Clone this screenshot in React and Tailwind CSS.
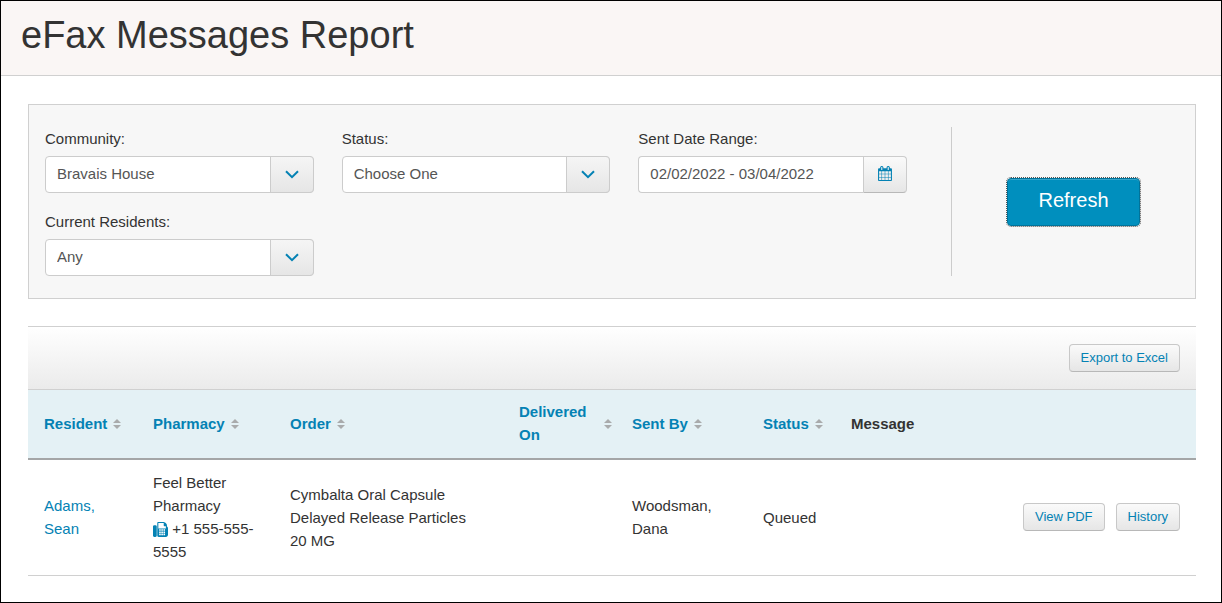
import React, { useState } from 'react';

const communities = ['Bravais House'];
const statuses = ['Choose One', 'Queued', 'Delivered', 'Failed'];
const residentOptions = ['Any', 'Yes', 'No'];

const columns = [
  { key: 'resident', label: 'Resident', sortable: true, width: 'w-[109px]' },
  { key: 'pharmacy', label: 'Pharmacy', sortable: true, width: 'w-[137px]' },
  { key: 'order', label: 'Order', sortable: true, width: 'w-[229px]' },
  { key: 'deliveredOn', label: 'Delivered On', sortable: true, width: 'w-[113px]' },
  { key: 'sentBy', label: 'Sent By', sortable: true, width: 'w-[131px]' },
  { key: 'status', label: 'Status', sortable: true, width: 'w-[88px]' },
  { key: 'message', label: 'Message', sortable: false, width: 'w-[97px]' },
];

const initialMessages = [
  {
    id: 1,
    resident: 'Adams, Sean',
    pharmacy: 'Feel Better Pharmacy',
    fax: '+1 555-555-5555',
    order: 'Cymbalta Oral Capsule Delayed Release Particles 20 MG',
    deliveredOn: '',
    sentBy: 'Woodsman, Dana',
    status: 'Queued',
    message: '',
  },
];

const ChevronIcon = () => (
  <svg viewBox="0 0 14 9" className="w-3.5 h-[9px]" fill="none" stroke="#0482b4" strokeWidth="2" aria-hidden="true">
    <path d="M1 1.2 L7 7.2 L13 1.2" />
  </svg>
);

const CalendarIcon = () => (
  <svg viewBox="0 0 1664 1792" className="w-3.5 h-[15px]" fill="#0482b4" fillRule="evenodd" aria-hidden="true">
    <path d="M1664 384v1280q0 52-38 90t-90 38H128q-52 0-90-38t-38-90V384q0-52 38-90t90-38h128v-96q0-66 47-113t113-47h64q66 0 113 47t47 113v96h384v-96q0-66 47-113t113-47h64q66 0 113 47t47 113v96h128q52 0 90 38t38 90zM512 448V160q0-14-9-23t-23-9h-64q-14 0-23 9t-9 23v288q0 14 9 23t23 9h64q14 0 23-9t9-23zM1280 448V160q0-14-9-23t-23-9h-64q-14 0-23 9t-9 23v288q0 14 9 23t23 9h64q14 0 23-9t9-23zM128 640h288v288H128zM480 640h320v288H480zM864 640h320v288H864zM1248 640h288v288h-288zM128 992h288v320H128zM480 992h320v320H480zM864 992h320v320H864zM1248 992h288v320h-288zM128 1376h288v288H128zM480 1376h320v288H480zM864 1376h320v288H864zM1248 1376h288v288h-288z" />
  </svg>
);

const FaxIcon = () => (
  <svg viewBox="0 0 1792 1792" className="inline-block align-text-bottom w-[15px] h-[15px]" fill="#0482b4" fillRule="evenodd" aria-hidden="true">
    <path d="M288 384q66 0 113 47t47 113v1088q0 66-47 113t-113 47h-128q-66 0-113-47t-47-113v-1088q0-66 47-113t113-47h128zM1664 547q58 34 93 93t35 128v768q0 106-75 181t-181 75h-864q-66 0-113-47t-47-113v-1536q0-40 28-68t68-28h672q40 0 88 20t76 48l152 152q28 28 48 76t20 88v163zM736 864h192v192h-192zM992 864h192v192h-192zM1248 864h192v192h-192zM736 1120h192v192h-192zM992 1120h192v192h-192zM1248 1120h192v192h-192zM736 1376h192v192h-192zM992 1376h192v192h-192zM1248 1376h192v192h-192zM1536 768v-256h-160q-40 0-68-28t-28-68v-288h-640v640h896z" />
  </svg>
);

const SortIcon = () => (
  <svg viewBox="0 0 8 10" className="shrink-0 w-2 h-2.5 mt-0.5" fill="#a9abac" aria-hidden="true">
    <path d="M4 0 L8 4 H0 Z" />
    <path d="M4 10 L8 6 H0 Z" />
  </svg>
);

const SelectField = ({ id, label, value, options, onChange }) => (
  <div className="flex flex-col gap-1.5">
    <label htmlFor={id}>{label}</label>
    <div className="relative">
      <select
        id={id}
        value={value}
        onChange={(e) => onChange(e.target.value)}
        className="appearance-none block w-full h-[37px] pl-[11px] pr-12 pb-0.5 bg-white border border-[#ccc] rounded text-[#555]"
      >
        {options.map((option) => (
          <option key={option}>{option}</option>
        ))}
      </select>
      {/* Arrow box on top of the native select */}
      <span className="absolute inset-y-0 right-0 w-11 flex items-center justify-center border border-[#ccc] rounded-r bg-linear-to-b from-[#f5f5f5] to-[#e6e6e6] pointer-events-none">
        <ChevronIcon />
      </span>
    </div>
  </div>
);

const SmallButton = ({ children, ...props }) => (
  <button
    type="button"
    className="h-7 px-[11px] border border-[#c8c8c8] border-b-[#b8b8b8] rounded bg-linear-to-b from-[#fafafa] to-[#e6e6e6] text-[13px] leading-5 text-[#0482b4] whitespace-nowrap"
    {...props}
  >
    {children}
  </button>
);

const App = () => {
  const [community, setCommunity] = useState('Bravais House');
  const [status, setStatus] = useState('Choose One');
  const [currentResidents, setCurrentResidents] = useState('Any');
  const [dateRange, setDateRange] = useState('02/02/2022 - 03/04/2022');
  const [messages, setMessages] = useState(initialMessages);

  const handleSort = (key) => {
    setMessages([...messages].sort((a, b) => a[key].localeCompare(b[key])));
  };

  return (
    <div className="min-h-screen bg-white border border-black font-['Liberation_Sans',Arial,sans-serif] text-[15px] leading-[23px] text-[#333]">
      <header className="bg-[#faf6f5] border-b border-[#d0d0d0] px-5 pt-3 pb-[18px]">
        <h1 className="text-[38px] leading-11">eFax Messages Report</h1>
      </header>

      <main className="pl-[27px] pr-[25px] pt-7 pb-6">
        {/* Filters */}
        <form onSubmit={(e) => e.preventDefault()} className="flex py-[22px] bg-[#f7f7f7] border border-[#d0d0d0]">
          <div className="flex-1 grid grid-cols-3 gap-x-7 gap-y-[17px] pl-4 pr-11">
            <SelectField id="community" label="Community:" value={community} options={communities} onChange={setCommunity} />
            <SelectField id="status" label="Status:" value={status} options={statuses} onChange={setStatus} />
            <div className="flex flex-col gap-1.5">
              <label htmlFor="date-range">Sent Date Range:</label>
              <div className="flex">
                <input
                  id="date-range"
                  type="text"
                  value={dateRange}
                  onChange={(e) => setDateRange(e.target.value)}
                  className="flex-1 min-w-0 h-[37px] px-[11px] pb-0.5 bg-white border border-r-0 border-[#ccc] rounded-l text-[#555]"
                />
                <button type="button" aria-label="Pick dates" className="w-11 pb-0.5 flex items-center justify-center border border-[#ccc] border-b-[#b8b8b8] rounded-r bg-linear-to-b from-[#fafafa] to-[#e6e6e6]">
                  <CalendarIcon />
                </button>
              </div>
            </div>
            <SelectField id="current-residents" label="Current Residents:" value={currentResidents} options={residentOptions} onChange={setCurrentResidents} />
          </div>

          <div className="w-[244px] flex items-center justify-center border-l border-[#ccc]">
            <button type="submit" className="h-12 px-[30px] pb-1 rounded bg-[#008fbe] border border-[#00739a] outline-1 outline-dotted outline-[#555] text-xl text-white shadow-[inset_0_1px_0_#33a5cb]">
              Refresh
            </button>
          </div>
        </form>

        {/* Results */}
        <section className="mt-[27px]">
          <div className="flex justify-end px-4 py-[17px] border-y border-[#d0d0d0] bg-linear-to-b from-white to-[#ebebeb]">
            <SmallButton>Export to Excel</SmallButton>
          </div>

          <table className="w-full table-fixed border-separate border-spacing-0">
            <thead className="bg-[#e4f1f5]">
              <tr>
                {columns.map((col) => (
                  <th key={col.key} scope="col" className={`${col.width} pl-4 pr-1 pt-2.5 pb-3 text-left font-bold align-middle border-b-2 border-[#a4a6a7]`}>
                    {col.sortable ? (
                      <button type="button" onClick={() => handleSort(col.key)} className="flex items-center gap-1.5 text-left text-[#0482b4]">
                        <span>{col.label}</span>
                        <SortIcon />
                      </button>
                    ) : (
                      col.label
                    )}
                  </th>
                ))}
                <td className="border-b-2 border-[#a4a6a7]"></td>
              </tr>
            </thead>
            <tbody>
              {messages.map((item) => (
                <tr key={item.id} className="[&>td]:pl-4 [&>td]:pt-[11px] [&>td]:pb-3 [&>td]:align-middle [&>td]:border-b [&>td]:border-[#d0d0d0]">
                  <td className="pr-4"><a href="#resident" className="text-[#0482b4]">{item.resident}</a></td>
                  <td className="pr-4">
                    <div>{item.pharmacy}</div>
                    <div><FaxIcon /> {item.fax}</div>
                  </td>
                  <td className="pr-8">{item.order}</td>
                  <td className="pr-4">{item.deliveredOn}</td>
                  <td className="pr-4">{item.sentBy}</td>
                  <td className="pr-4">{item.status}</td>
                  <td className="pr-4">{item.message}</td>
                  <td className="pr-4">
                    <div className="flex justify-end gap-[11px]">
                      <SmallButton>View PDF</SmallButton>
                      <SmallButton>History</SmallButton>
                    </div>
                  </td>
                </tr>
              ))}
            </tbody>
          </table>
        </section>
      </main>
    </div>
  );
};

export default App;
